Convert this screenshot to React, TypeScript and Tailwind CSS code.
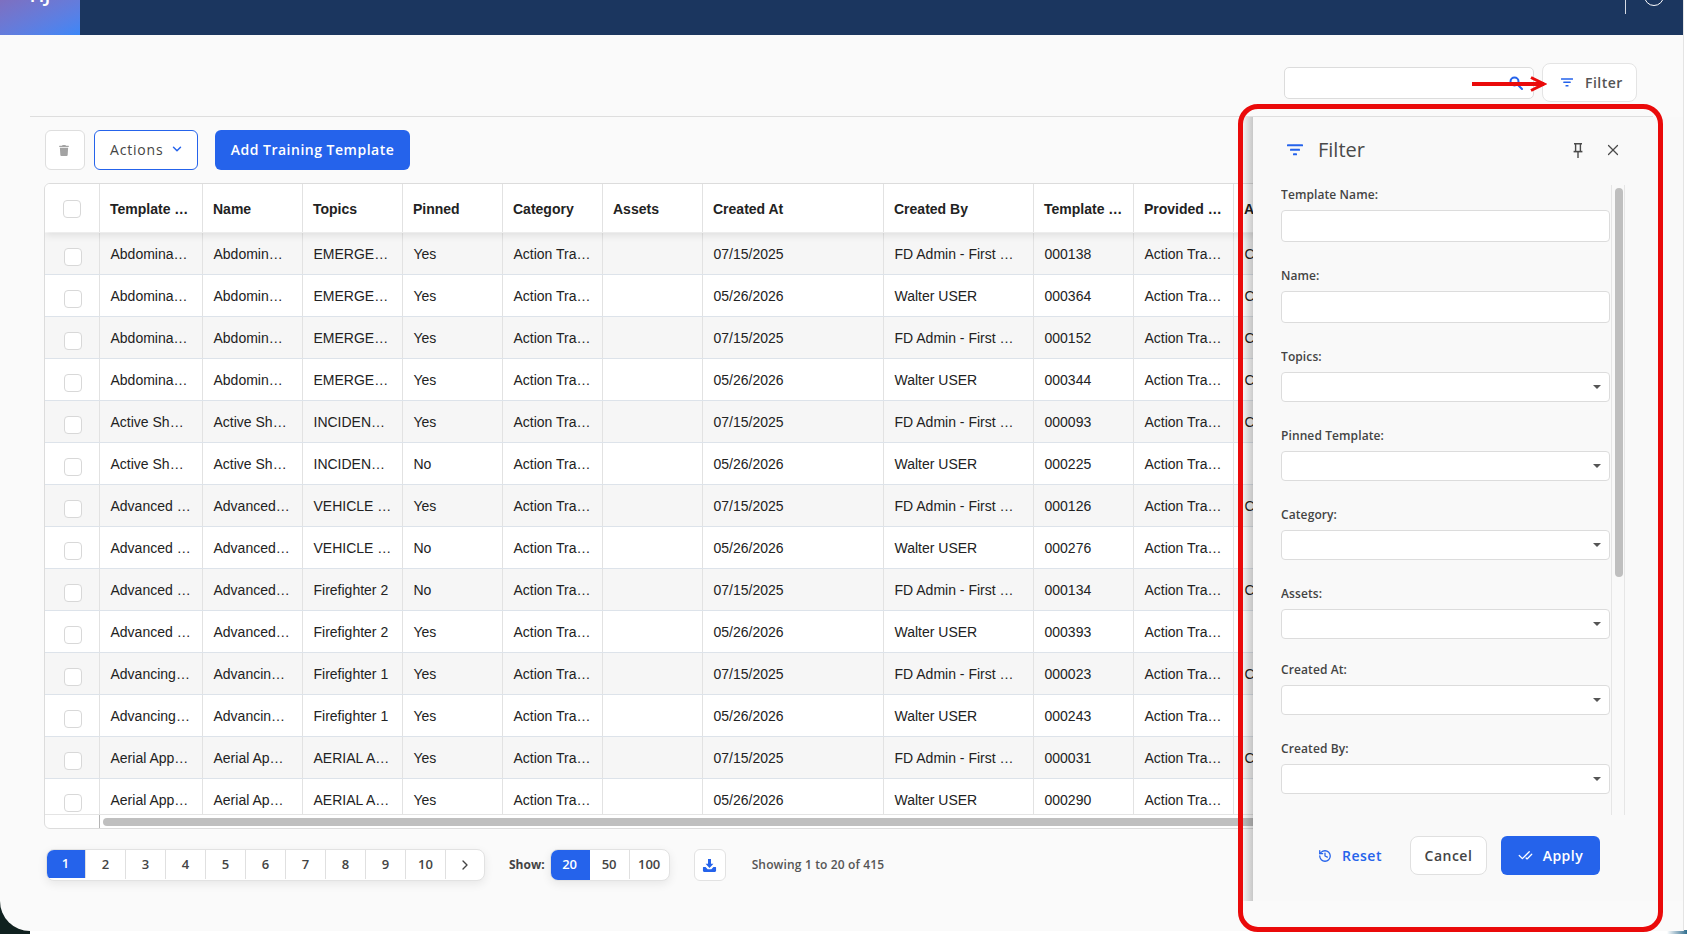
import { CheckCheck, ChevronDown, ChevronRight, History, X } from "lucide-react";
import { FaTrash } from "react-icons/fa";

const columnGrid =
  "grid grid-cols-[55px_103px_100px_100px_100px_100px_100px_181px_150px_100px_100px_300px]";

const headers = [
  "Template …",
  "Name",
  "Topics",
  "Pinned",
  "Category",
  "Assets",
  "Created At",
  "Created By",
  "Template …",
  "Provided …",
  "Active",
];

const FD = "FD Admin - First …";
const WU = "Walter USER";
const JUL = "07/15/2025";
const MAY = "05/26/2026";

const rows = [
  ["Abdomina…", "Abdomin…", "EMERGE…", "Yes", JUL, FD, "000138", "C"],
  ["Abdomina…", "Abdomin…", "EMERGE…", "Yes", MAY, WU, "000364", "C"],
  ["Abdomina…", "Abdomin…", "EMERGE…", "Yes", JUL, FD, "000152", "C"],
  ["Abdomina…", "Abdomin…", "EMERGE…", "Yes", MAY, WU, "000344", "C"],
  ["Active Sh…", "Active Sh…", "INCIDEN…", "Yes", JUL, FD, "000093", "C"],
  ["Active Sh…", "Active Sh…", "INCIDEN…", "No", MAY, WU, "000225", ""],
  ["Advanced …", "Advanced…", "VEHICLE …", "Yes", JUL, FD, "000126", "C"],
  ["Advanced …", "Advanced…", "VEHICLE …", "No", MAY, WU, "000276", ""],
  ["Advanced …", "Advanced…", "Firefighter 2", "No", JUL, FD, "000134", "C"],
  ["Advanced …", "Advanced…", "Firefighter 2", "Yes", MAY, WU, "000393", ""],
  ["Advancing…", "Advancin…", "Firefighter 1", "Yes", JUL, FD, "000023", "C"],
  ["Advancing…", "Advancin…", "Firefighter 1", "Yes", MAY, WU, "000243", ""],
  ["Aerial App…", "Aerial Ap…", "AERIAL A…", "Yes", JUL, FD, "000031", "C"],
  ["Aerial App…", "Aerial Ap…", "AERIAL A…", "Yes", MAY, WU, "000290", ""],
];

const filterFields = [
  { label: "Template Name:", box: "h-[32px]", gap: "mb-[25px]", arrow: false },
  { label: "Name:", box: "h-[32px]", gap: "mb-[25px]", arrow: false },
  { label: "Topics:", box: "h-[30px]", gap: "mb-[25px]", arrow: true },
  { label: "Pinned Template:", box: "h-[30px]", gap: "mb-[25px]", arrow: true },
  { label: "Category:", box: "h-[30px]", gap: "mb-[25px]", arrow: true },
  { label: "Assets:", box: "h-[30px]", gap: "mb-[22px]", arrow: true },
  { label: "Created At:", box: "h-[30px]", gap: "mb-[25px]", arrow: true },
  { label: "Created By:", box: "h-[30px]", gap: "mb-[25px]", arrow: true },
];

function FilterLines({ className }: { className?: string }) {
  return (
    <svg viewBox="0 0 16 12" className={className} fill="currentColor">
      <rect x="0" y="0.300" width="16" height="2" rx="0.4" />
      <rect x="3" y="4.800" width="10" height="2" rx="0.4" />
      <rect x="6" y="9.300" width="4" height="2" rx="0.4" />
    </svg>
  );
}

function PinIcon() {
  return (
    <svg viewBox="0 0 10 15" className="ml-auto h-[15px] w-[10px]" fill="none" stroke="currentColor">
      <path d="M1 .8h8M2.600 .8v7.400M7.400 .8v7.400" strokeWidth="1.400" />
      <path d="M.6 8.600h8.800" strokeWidth="1.600" />
      <path d="M5 8.600V15" strokeWidth="1.400" />
    </svg>
  );
}

function Checkbox() {
  return <div className="h-[18px] w-[18px] rounded-[4px] border border-[#d8d8d8] bg-white" />;
}

function Cell({ text }: { text: string }) {
  return (
    <div className="flex min-w-0 items-center whitespace-nowrap border-r border-[#e2e2e2] pl-[10.5px] pt-[2px] last:border-r-0">
      {text}
    </div>
  );
}

function DataTable() {
  return (
    <div className="ml-[44px] mt-[13px] w-[1600px] shrink-0 overflow-hidden rounded-l-[6px] border border-[#dcdcdc] bg-white font-['Liberation_Sans',sans-serif] text-[14px] text-[#222]">
      <div className={`${columnGrid} relative h-[48px] bg-white font-bold shadow-[0_3px_8px_rgba(0,0,0,0.1)]`}>
        <div className="flex items-center border-r border-[#e2e2e2] pl-[18px] pt-[1px]">
          <Checkbox />
        </div>
        {headers.map((h, i) => (
          <div key={i} className="flex items-center whitespace-nowrap border-r border-[#e2e2e2] pl-[10px] pt-[3px]">
            {h}
          </div>
        ))}
      </div>
      <div className="h-[582px] overflow-hidden pt-px">
        {rows.map((r, i) => (
          <div
            key={r[6]}
            className={`${columnGrid} h-[42px] border-b border-[#dde3ea] ${i % 2 === 0 ? "bg-[#f6f6f6]" : "bg-white"}`}
          >
            <div className="flex items-center border-r border-[#e2e2e2] pl-[19px] pt-[6px]">
              <Checkbox />
            </div>
            <Cell text={r[0]} />
            <Cell text={r[1]} />
            <Cell text={r[2]} />
            <Cell text={r[3]} />
            <Cell text="Action Tra…" />
            <Cell text="" />
            <Cell text={r[4]} />
            <Cell text={r[5]} />
            <Cell text={r[6]} />
            <Cell text="Action Tra…" />
            <Cell text={r[7]} />
          </div>
        ))}
      </div>
      <div className="flex h-[14px] border-t border-[#e4e4e4]">
        <div className="w-[55px] border-r border-[#b5b5b5]" />
        <div className="ml-[3px] mt-[3px] h-[8px] flex-1 rounded-[4px] bg-[#bfbfbf]" />
      </div>
    </div>
  );
}

function Pager() {
  const pages = ["1", "2", "3", "4", "5", "6", "7", "8", "9", "10"];
  return (
    <div className="ml-[46px] mt-[20px] flex h-[32px] items-center text-[13px] font-semibold text-[#444]">
      <div className="flex h-full w-[439px] overflow-hidden rounded-[8px] border border-[#e2e2e2] bg-white pb-[1px] shadow-[0_3px_10px_rgba(0,0,0,0.08)]">
        {pages.map((p, i) => (
          <div
            key={p}
            className={`flex h-full w-[40px] items-center justify-center border-r border-[#e0e0e0] ${
              i === 0 ? "-my-px -ml-px h-[32px] bg-[#2563eb] text-white" : ""
            }`}
          >
            {p}
          </div>
        ))}
        <div className="flex flex-1 items-center justify-center">
          <ChevronRight className="h-[16px] w-[16px]" strokeWidth={2} />
        </div>
      </div>
      <span className="ml-[24px] pb-[1px] text-[12px] font-bold">Show:</span>
      <div className="ml-[5px] flex h-full w-[120px] overflow-hidden rounded-[8px] border border-[#e2e2e2] bg-white pb-[1px] shadow-[0_3px_10px_rgba(0,0,0,0.08)]">
        <div className="-my-px -ml-px flex h-[32px] w-[40px] items-center justify-center bg-[#2563eb] text-white">20</div>
        <div className="flex w-[40px] items-center justify-center border-r border-[#e0e0e0]">50</div>
        <div className="flex flex-1 items-center justify-center">100</div>
      </div>
      <div className="ml-[24px] flex h-full w-[32px] items-center justify-center rounded-[6px] border border-[#e2e2e2] bg-white">
        <svg viewBox="0 0 16 16" className="h-[15px] w-[15px] text-[#2563eb]" fill="currentColor">
          <path d="M6.4 1h3.2v5.2h2.600L8 10.600 3.800 6.200h2.600z" />
          <path d="M1.500 9.600h2.300L6 12h4l2.200-2.400h2.300c.3 0 .5.2.5.5v3.600c0 .7-.6 1.300-1.300 1.300H2.300C1.600 15 1 14.400 1 13.700v-3.600c0-.3.2-.5.5-.5z" />
        </svg>
      </div>
      <span className="ml-[26px] pb-[1px] text-[12px] tracking-[0.15px] text-[#555]">Showing 1 to 20 of 415</span>
    </div>
  );
}

function FilterPanel() {
  return (
    <div className="absolute bottom-[30px] left-[1253px] top-[117px] z-20 flex w-[430px] flex-col bg-[#f9f9f9]">
      <div className="absolute -left-[12px] bottom-0 top-0 w-[12px] bg-gradient-to-r from-black/0 to-black/20" />
      <div className="mb-[2px] flex h-[66px] shrink-0 items-center pl-[34px] pr-[61px] text-[#4a4a4a]">
        <FilterLines className="h-[12px] w-[16px] text-[#2563eb]" />
        <span className="ml-[15px] text-[20px]">Filter</span>
        <PinIcon />
        <X className="ml-[21px] h-[18px] w-[18px]" strokeWidth={1.6} />
      </div>
      <div className="flex h-[630px] shrink-0 pl-[28px]">
        <div className="h-full w-[329px] overflow-hidden pt-px">
          {filterFields.map((f) => (
            <div key={f.label} className={f.gap}>
              <div className="mb-[6px] h-[18px] text-[12px] font-semibold leading-[18px] tracking-[0.1px] text-[#444]">
                {f.label}
              </div>
              <div className={`flex items-center justify-end rounded-[4px] border border-[#dcdcdc] bg-white pr-[8px] ${f.box}`}>
                {f.arrow && (
                  <div className="h-0 w-0 border-x-[4px] border-t-[4px] border-x-transparent border-t-[#555]" />
                )}
              </div>
            </div>
          ))}
        </div>
        <div className="ml-[1px] h-full w-[14px] border-x border-[#e6e6e6] pl-[3px] pt-[3px]">
          <div className="h-[389px] w-[8px] rounded-[4px] bg-[#bfbfbf]" />
        </div>
      </div>
      <div className="ml-[65px] mt-[21px] flex h-[39px] items-center text-[14px] font-semibold tracking-[0.5px]">
        <div className="flex items-center text-[#2563eb]">
          <History className="h-[14px] w-[14px]" strokeWidth={2.2} />
          <span className="ml-[10px]">Reset</span>
        </div>
        <div className="ml-[28px] flex h-full w-[77px] items-center justify-center rounded-[8px] border border-[#e0e0e0] bg-white text-[#444]">
          Cancel
        </div>
        <div className="ml-[14px] flex h-full w-[99px] items-center justify-center gap-[10px] rounded-[6px] bg-[#2563eb] text-white">
          <CheckCheck className="h-[15px] w-[15px]" strokeWidth={2} />
          Apply
        </div>
      </div>
    </div>
  );
}

export default function App() {
  return (
    <div className="relative h-[934px] w-[1687px] overflow-hidden bg-white font-['Open_Sans',sans-serif]">
      <div className="absolute bottom-0 left-0 h-[40px] w-[30px] bg-[#10211f]" />
      <div className="absolute bottom-0 right-0 h-[4px] w-[20px] bg-gradient-to-r from-white to-[#2f6f8f]" />
      <div className="relative flex h-[931px] w-[1684px] flex-col overflow-hidden rounded-bl-[30px] border-r border-[#e4e4e4] bg-[#fafafa]">
        <header className="flex h-[35px] shrink-0 bg-[#1b365f]">
          <div className="flex h-full w-[80px] justify-center overflow-hidden bg-gradient-to-br from-[#7d6fc0] to-[#3b87f7]">
            <span className="-mt-[17px] text-[20px] font-semibold leading-[24px] text-white">HJ</span>
          </div>
          <div className="ml-auto mr-[57px] h-[14px] w-px bg-[#d6dbe4]" />
          <div className="absolute right-[19px] top-[-14px] h-[20px] w-[20px] rounded-full border-[1.5px] border-white" />
        </header>

        <div className="mt-[28px] flex h-[39px] shrink-0 items-center justify-end pr-[46px]">
          <div className="flex h-[32px] w-[250px] items-center justify-end rounded-[5px] border border-[#dcdcdc] bg-white pr-[10px]">
            <svg viewBox="0 0 14 14" className="h-[14px] w-[14px] text-[#2563eb]" fill="none" stroke="currentColor" strokeWidth="2">
              <circle cx="5.500" cy="5.500" r="4" />
              <path d="M8.500 8.500l4.500 4.500" strokeLinecap="round" />
            </svg>
          </div>
          <div className="ml-[8px] flex h-[39px] w-[95px] items-center rounded-[8px] border border-[#e4e4e4] bg-white pl-[18px] text-[14px] font-semibold tracking-[0.5px] text-[#555]">
            <FilterLines className="h-[9px] w-[12px] text-[#2563eb]" />
            <span className="ml-[12px]">Filter</span>
          </div>
        </div>

        <div className="ml-[30px] mr-[30px] mt-[14px] h-px shrink-0 bg-[#dedede]" />

        <div className="ml-[45px] mt-[13px] flex h-[40px] shrink-0 items-center text-[14px]">
          <div className="flex h-full w-[40px] items-center justify-center rounded-[6px] border border-[#dedede] bg-white pr-[2px] text-[#a3a3a3]">
            <FaTrash className="h-[11px] w-[10px]" />
          </div>
          <div className="ml-[9px] flex h-full w-[104px] items-center rounded-[6px] border border-[#2563eb] bg-white pb-[2px] pl-[15px] font-medium tracking-[0.8px] text-[#444]">
            Actions
            <ChevronDown className="ml-[7px] h-[14px] w-[14px] text-[#2563eb]" strokeWidth={2.5} />
          </div>
          <div className="ml-[17px] flex h-full w-[195px] items-center justify-center rounded-[6px] bg-[#2563eb] pb-[2px] font-semibold tracking-[0.5px] text-white">
            Add Training Template
          </div>
        </div>

        <DataTable />
        <Pager />
        <FilterPanel />
      </div>

      {/* review markup drawn over the page */}
      <div className="absolute left-[1238px] top-[104px] z-30 h-[828px] w-[425px] rounded-[20px] border-[5px] border-[#ea0a0a]" />
      <svg viewBox="0 0 76 16" className="absolute left-[1471px] top-[76px] z-30 h-[16px] w-[76px] text-[#ea0a0a]" fill="none" stroke="currentColor">
        <path d="M1 8h72" strokeWidth="4" />
        <path d="M60 1.500l13 6.500-13 6.500" strokeWidth="3" />
      </svg>
    </div>
  );
}
